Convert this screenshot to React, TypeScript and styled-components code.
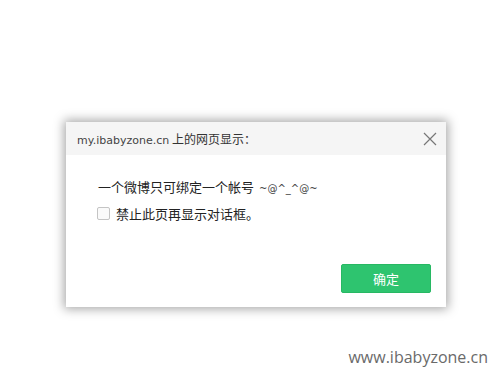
import React from "react";
import styled, { createGlobalStyle } from "styled-components";

const Global = createGlobalStyle`
  html, body { margin: 0; padding: 0; background: #ffffff; }
  body { width: 496px; height: 369px; overflow: hidden; font-family: "Noto Sans CJK SC", "Liberation Sans", sans-serif; }
`;

const Page = styled.div`
  position: relative;
  width: 496px;
  height: 369px;
  display: flex;
  flex-direction: column;
  align-items: flex-start;
`;

const Dialog = styled.div`
  margin: 122px 0 0 66px;
  width: 380px;
  height: 185px;
  background: #ffffff;
  box-shadow: 0 0 10px 2px rgba(0, 0, 0, 0.35);
  display: flex;
  flex-direction: column;
`;

const Header = styled.div`
  height: 33px;
  background: #f5f5f5;
  display: flex;
  align-items: center;
  justify-content: space-between;
  padding: 0 8px 0 11px;
`;

const Title = styled.div`
  font-size: 12px;
  color: #333;
  display: flex;
  align-items: baseline;
`;

const Latin = styled.span`
  font-family: "DejaVu Sans", sans-serif;
  font-size: 11px;
  color: #444;
`;

const Close = styled.button`
  border: 0;
  background: none;
  padding: 0;
  width: 16px;
  height: 16px;
  display: flex;
`;

const Body = styled.div`
  flex: 1;
  display: flex;
  flex-direction: column;
  padding: 22px 0 0 31px;
  gap: 6px;
`;

const Message = styled.div`
  font-size: 13px;
  line-height: 19px;
  color: #222;
  display: flex;
  align-items: baseline;
  margin-left: 1px;
`;

const Small = styled.span`
  font-family: "DejaVu Sans", sans-serif;
  font-size: 10px;
  color: #444;
  margin-left: 5px;
`;

const CheckRow = styled.label`
  display: flex;
  align-items: center;
  gap: 6px;
  font-size: 13px;
  line-height: 19px;
  color: #222;
`;

const Box = styled.span`
  width: 11px;
  height: 11px;
  border: 1px solid #c4c4c4;
  border-radius: 2px;
  background: #fafafa;
`;

const Footer = styled.div`
  display: flex;
  justify-content: flex-end;
  padding: 0 15px 14px 0;
`;

const OkButton = styled.button`
  width: 90px;
  height: 29px;
  border: 1px solid #27b863;
  border-radius: 2px;
  background: #2ec46f;
  color: #ffffff;
  font-family: "Noto Sans CJK SC", sans-serif;
  font-size: 13px;
  padding: 0;
`;

const Watermark = styled.div`
  position: absolute;
  right: 8px;
  bottom: 1px;
  font-family: "Open Sans", "Liberation Sans", sans-serif;
  font-size: 16px;
  color: #6a6a6a;
`;

export default function App() {
  return (
    <Page>
      <Global />
      <Dialog>
        <Header>
          <Title>
            <Latin>my.ibabyzone.cn</Latin>&nbsp;上的网页显示：
          </Title>
          <Close aria-label="close">
            <svg width="16" height="16" viewBox="0 0 16 16">
              <path d="M2 2 L14 14 M14 2 L2 14" stroke="#777" strokeWidth="1.2" />
            </svg>
          </Close>
        </Header>
        <Body>
          <Message>
            一个微博只可绑定一个帐号<Small>~@^_^@~</Small>
          </Message>
          <CheckRow>
            <Box />
            禁止此页再显示对话框。
          </CheckRow>
        </Body>
        <Footer>
          <OkButton>确定</OkButton>
        </Footer>
      </Dialog>
      <Watermark>www.ibabyzone.cn</Watermark>
    </Page>
  );
}
